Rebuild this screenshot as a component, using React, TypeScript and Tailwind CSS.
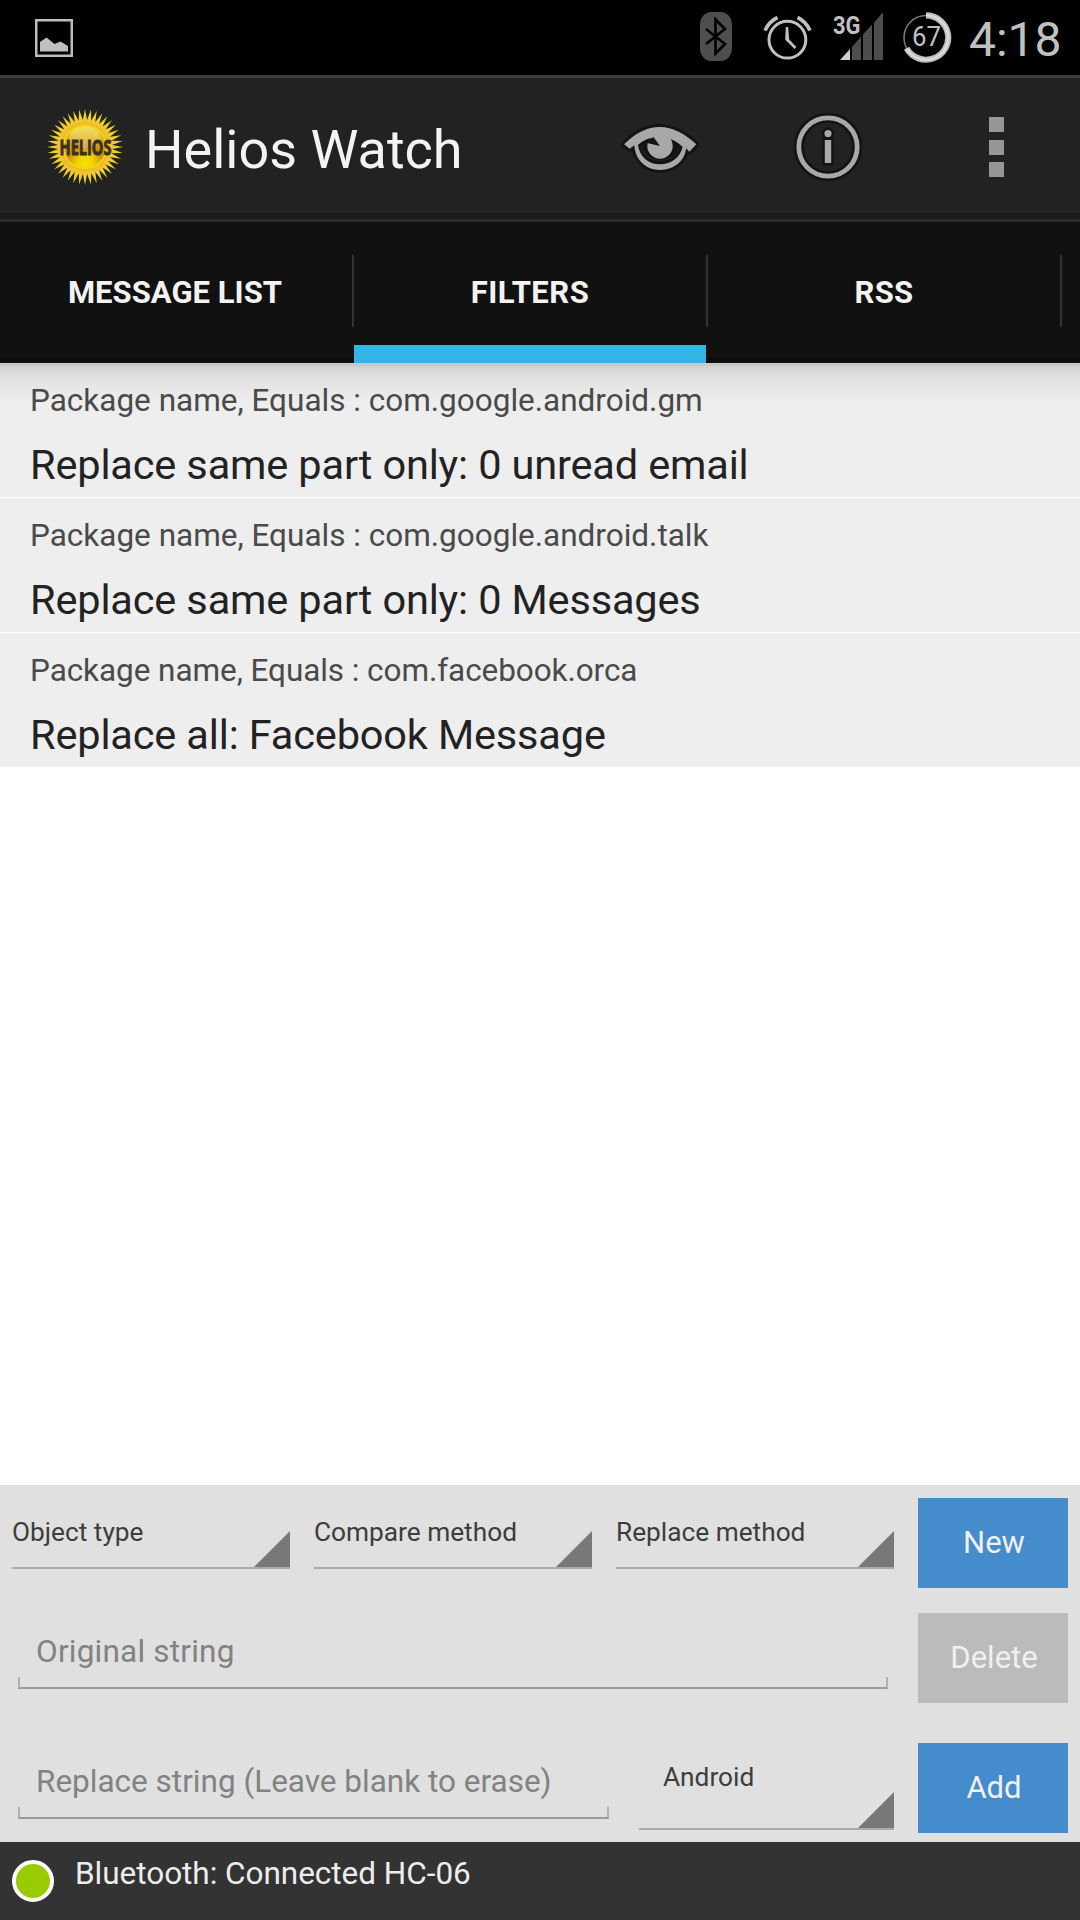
import React from 'react';

const RAYS = 40;
const sunPoints = Array.from({ length: RAYS * 2 }, (_, i) => {
  const a = (i * Math.PI) / RAYS - Math.PI / 2;
  const r = i % 2 === 0 ? 38 : 27;
  return `${(40 + r * Math.cos(a)).toFixed(2)},${(40 + r * Math.sin(a)).toFixed(2)}`;
}).join(' ');

function HeliosLogo() {
  return (
    <svg width="80" height="80" viewBox="0 0 80 80" className="overflow-visible">
      <defs>
        <radialGradient id="rays" cx="40" cy="40" r="38" gradientUnits="userSpaceOnUse">
          <stop offset="0.55" stopColor="#eeb422" />
          <stop offset="0.74" stopColor="#f0cb35" />
          <stop offset="1" stopColor="#ddd40c" />
        </radialGradient>
        <radialGradient id="disk" cx="40" cy="57" r="36" gradientUnits="userSpaceOnUse">
          <stop offset="0" stopColor="#f2e600" />
          <stop offset="0.25" stopColor="#efd000" />
          <stop offset="0.5" stopColor="#cf8f10" />
          <stop offset="1" stopColor="#f0c020" />
        </radialGradient>
        <linearGradient id="gloss" x1="0" y1="19" x2="0" y2="40" gradientUnits="userSpaceOnUse">
          <stop offset="0" stopColor="#f4e45c" />
          <stop offset="1" stopColor="#dfa94c" />
        </linearGradient>
      </defs>
      <polygon points={sunPoints} fill="url(#rays)" />
      <circle cx="40" cy="40" r="21.5" fill="url(#disk)" stroke="#f0dc0c" strokeWidth="1.5" />
      <ellipse cx="40" cy="30.5" rx="15.5" ry="11" fill="url(#gloss)" />
      <text x="14.5" y="48.3" fontSize="22" fontWeight="700" fill="#39331d" stroke="#39331d" strokeWidth="1" textLength="52" lengthAdjust="spacingAndGlyphs" className="font-['Open_Sans',sans-serif]">
        HELIOS
      </text>
    </svg>
  );
}

function StatusBar() {
  return (
    <header className="flex h-[75px] items-start bg-black pl-[35px] pr-5">
      <svg width="38" height="38" viewBox="0 0 38 38" className="mt-[19px]">
        <rect x="1.25" y="1.25" width="35.5" height="35.5" fill="none" stroke="#bcbcbc" strokeWidth="2.5" />
        <path d="M5 23 L11.5 18.5 L19.5 25 L25.5 22.5 L33 27 V32.5 H5Z" fill="#bfbfbf" />
      </svg>
      <svg width="32" height="49" viewBox="0 0 32 49" className="ml-auto mt-3">
        <rect width="32" height="49" rx="11" ry="13" fill="#4e4e4e" />
        <path d="M6 17 L25 32 L15.5 41.5 V7.5 L25 17 L6 32" fill="none" stroke="#000" strokeWidth="2.6" />
      </svg>
      <svg width="50" height="50" viewBox="0 0 50 50" className="ml-[30px] mt-3">
        <g fill="none" stroke="#c0c0c0">
          <circle cx="25.4" cy="27.7" r="18.4" strokeWidth="3" />
          <path d="M3 18.5 Q7 9.5 15.5 5.5 M35.5 5.5 Q44 9.5 48 18.5" strokeWidth="3.6" />
          <path d="M25.2 27.5 L33.5 36" strokeWidth="2.8" />
        </g>
        <path d="M23.8 15 H26.2 L27.2 28.5 L25 29.5 L23.2 27.5Z" fill="#c0c0c0" />
      </svg>
      <svg width="52" height="50" viewBox="0 0 52 50" className="ml-[21px] mt-3 overflow-visible">
        <text x="0" y="21.8" fontSize="26.5" fontWeight="700" fill="#c0c0c0" textLength="27.5" lengthAdjust="spacingAndGlyphs" className="font-[Roboto,sans-serif]">
          3G
        </text>
        <path d="M7 48 L17 37 V48Z" fill="#cfcfcf" />
        <path d="M19 48 V34.8 L28 24.8 V48Z M30 48 V22.5 L39 12.5 V48Z M41 48 V10.5 L50 0.3 V48Z" fill="#4d4d4d" />
      </svg>
      <svg width="52" height="52" viewBox="0 0 52 52" className="ml-[16px] mt-[11px]">
        <circle cx="25" cy="26.5" r="22" fill="none" stroke="#777" strokeWidth="1.6" />
        <path d="M25 4.3 A22.2 22.2 0 1 1 5.6 37.3" fill="none" stroke="#bdbdbd" strokeWidth="6.2" />
        <path d="M25 4.3 A22.2 22.2 0 1 1 5.6 37.3" fill="none" stroke="#dadada" strokeWidth="2.6" />
        <text x="11" y="35.3" fontSize="27.5" fill="#c0c0c0" textLength="29" lengthAdjust="spacingAndGlyphs" className="font-[Roboto,sans-serif]">
          67
        </text>
      </svg>
      <span className="ml-[16px] mt-[6px] w-[91px] whitespace-nowrap text-[48px] leading-[68px] text-[#c0c0c0]">4:18</span>
    </header>
  );
}

const EYE = 'M132 196 C168 160 205 144 237 144 C280 144 315 165 349 196 L328 218 L318 208 C316 245 282 273 240 273 C198 273 165 243 163 199 L149 209Z';

function ActionBar() {
  return (
    <div className="h-[144px] border-t-[3px] border-[#3b3b3b] bg-[#222]">
      <div className="flex h-[138px] items-center pl-[45px] pr-[76px]">
        <HeliosLogo />
        <h1 className="ml-[20px] mt-[6px] text-[54px] leading-[64px] text-[#f3f3f3]">Helios Watch</h1>
        <svg width="80" height="52" viewBox="120 126 240 156" className="ml-auto">
          <path d={EYE} fill="#141414" stroke="#141414" strokeWidth="18" strokeLinejoin="round" />
          <path d={EYE} fill="#a8a8a8" />
          <path d="M174 197 C190 184 208 177 222 175 L272 181 C290 187 300 197 308 204 C300 235 275 256 240 256 C205 256 178 232 174 197Z" fill="#131313" />
          <path d="M184 203 C190 228 212 244 240 244 C266 244 288 230 297 204" fill="none" stroke="#222" strokeWidth="4" />
          <circle cx="240" cy="201" r="38" fill="#a8a8a8" />
          <path d="M198 191 L240 201 L221 175 Q208 179 198 186Z" fill="#131313" />
        </svg>
        <svg width="72" height="72" viewBox="0 0 72 72" className="ml-[92px]">
          <circle cx="36" cy="36" r="29.2" fill="none" stroke="#131313" strokeWidth="10" />
          <circle cx="36" cy="36" r="29.2" fill="none" stroke="#a8a8a8" strokeWidth="4.8" />
          <g fill="#a8a8a8" stroke="#131313" strokeWidth="5" strokeLinejoin="round" className="[paint-order:stroke]">
            <circle cx="36" cy="22.6" r="3.6" />
            <rect x="32.8" y="29" width="6.4" height="23" />
          </g>
        </svg>
        <div className="ml-[125px] flex flex-col gap-[7.5px]">
          <i className="size-[15px] bg-[#969696]" />
          <i className="size-[15px] bg-[#969696]" />
          <i className="size-[15px] bg-[#969696]" />
        </div>
      </div>
      <div className="-mt-[3px] h-[6px] bg-[#1a1a1a]" />
    </div>
  );
}

function Tab({ label, active, tracking }: { label: string; active?: boolean; tracking: string }) {
  return (
    <>
      <div className={`flex h-full w-[352px] items-center justify-center ${active ? 'border-b-[18px] border-[#33b5e5] pt-[18px]' : ''}`}>
        <span className={`text-[31px] font-bold leading-[40px] text-[#f3f3f3] ${tracking}`}>{label}</span>
      </div>
      <div className="mb-[3px] h-[72px] w-[2px] self-center bg-[#333]" />
    </>
  );
}

function FilterRow({ rule, action, tracking }: { rule: string; action: string; tracking?: string }) {
  return (
    <li className="h-[134px] whitespace-nowrap bg-[#eee] pl-[30px] pt-[18px]">
      <p className={`text-[31.5px] leading-[40px] text-[#4a4a4a] ${tracking ?? ''}`}>{rule}</p>
      <p className="mt-[15px] text-[41.5px] leading-[57px] tracking-[-0.15px] text-[#222]">{action}</p>
    </li>
  );
}

function Spinner({ label, className }: { label: string; className: string }) {
  return (
    <div className={`relative border-b-2 border-[#aaa] pt-[14px] ${className}`}>
      <span className="block whitespace-nowrap text-[26.25px] leading-[40px] text-[#3d3d3d]">{label}</span>
      <svg width="36" height="36" viewBox="0 0 36 36" className="absolute bottom-0 right-0">
        <path d="M36 0 V36 H0Z" fill="#787878" />
      </svg>
    </div>
  );
}

function Field({ hint, className }: { hint: string; className: string }) {
  return (
    <div className={`ml-[6px] flex h-[76px] flex-col ${className}`}>
      <span className="mt-[19px] block whitespace-nowrap pl-[18px] text-[31.5px] leading-[40px] text-[#828282]">{hint}</span>
      <div className="mt-auto h-[12px] border-2 border-t-0 border-x-[#b0b0b0] border-b-[#9b9b9b]" />
    </div>
  );
}

function Button({ label, className }: { label: string; className: string }) {
  return (
    <button className={`ml-auto h-[90px] w-[150px] pl-[2px] text-[31px] leading-[40px] text-[#f0f0f0] ${className}`}>{label}</button>
  );
}

export default function App() {
  return (
    <div className="flex h-[1920px] w-[1080px] flex-col overflow-hidden bg-white font-[Roboto,sans-serif]">
      <StatusBar />
      <ActionBar />
      <nav className="flex h-[144px] items-center border-t-[3px] border-[#2b2b2b] bg-[linear-gradient(to_bottom,#111_135px,#0d0d0d_135px)]">
        <Tab label="MESSAGE LIST" tracking="tracking-[0.03px] -ml-[2px]" />
        <Tab label="FILTERS" active tracking="tracking-[0.5px]" />
        <Tab label="RSS" tracking="tracking-[0.3px]" />
      </nav>
      <main className="relative flex-1">
        <ul className="flex flex-col gap-px">
          <FilterRow rule="Package name, Equals : com.google.android.gm" action="Replace same part only: 0 unread email" />
          <FilterRow rule="Package name, Equals : com.google.android.talk" action="Replace same part only: 0 Messages" />
          <FilterRow rule="Package name, Equals : com.facebook.orca" action="Replace all: Facebook Message" tracking="tracking-[-0.07px]" />
        </ul>
        <div className="absolute inset-x-0 top-0 h-[40px] border-t-[3px] border-black/[0.16] bg-[linear-gradient(to_bottom,rgba(0,0,0,0.12),rgba(0,0,0,0.05)_35%,transparent)] bg-clip-padding" />
      </main>
      <section className="flex h-[357px] flex-col bg-[#e0e0e0] px-[12px] pt-[13px]">
        <div className="flex items-start gap-6">
          <Spinner label="Object type" className="h-[71px] w-[278px]" />
          <Spinner label="Compare method" className="h-[71px] w-[278px]" />
          <Spinner label="Replace method" className="h-[71px] w-[278px]" />
          <Button label="New" className="bg-[#448ccb]" />
        </div>
        <div className="mt-[25px] flex items-start">
          <Field hint="Original string" className="w-[870px] tracking-[0.22px]" />
          <Button label="Delete" className="bg-[#bbb]" />
        </div>
        <div className="mt-[40px] flex items-start">
          <Field hint="Replace string (Leave blank to erase)" className="w-[591px]" />
          <Spinner label="Android" className="ml-[30px] h-[87px] w-[255px] pl-[24px]" />
          <Button label="Add" className="bg-[#448ccb]" />
        </div>
      </section>
      <footer className="flex h-[78px] items-start bg-[#333] pl-[12px]">
        <div className="mt-[18px] size-[42px] rounded-full border-4 border-white bg-[#99cc00]" />
        <span className="ml-[21px] mt-[12px] text-[31.5px] leading-[40px] tracking-[-0.03px] text-[#ededed]">Bluetooth: Connected HC-06</span>
      </footer>
    </div>
  );
}
